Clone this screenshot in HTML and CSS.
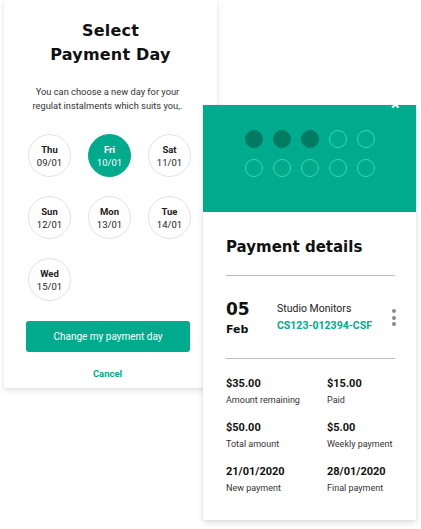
FILE: index.html
```html
<!DOCTYPE html>
<html>
<head>
<meta charset="utf-8">
<link rel="stylesheet" href="styles.css">
</head>
<body>
<div class="stage">
  <section class="card select-card">
    <h1 class="title">Select<br>Payment Day</h1>
    <p class="subtitle">You can choose a new day for your<br>regulat instalments which suits you,.</p>
    <div class="days">
      <div class="day"><span class="dname">Thu</span><span class="ddate">09/01</span></div>
      <div class="day active"><span class="dname">Fri</span><span class="ddate">10/01</span></div>
      <div class="day"><span class="dname">Sat</span><span class="ddate">11/01</span></div>
      <div class="day"><span class="dname">Sun</span><span class="ddate">12/01</span></div>
      <div class="day"><span class="dname">Mon</span><span class="ddate">13/01</span></div>
      <div class="day"><span class="dname">Tue</span><span class="ddate">14/01</span></div>
      <div class="day"><span class="dname">Wed</span><span class="ddate">15/01</span></div>
    </div>
    <div class="btn">Change my payment day</div>
    <div class="cancel">Cancel</div>
  </section>

  <section class="card details-card">
    <div class="close">×</div>
    <div class="hero">
      <div class="dots">
        <span class="dot full"></span><span class="dot full"></span><span class="dot full"></span><span class="dot"></span><span class="dot"></span>
        <span class="dot"></span><span class="dot"></span><span class="dot"></span><span class="dot"></span><span class="dot"></span>
      </div>
    </div>
    <div class="body">
      <h2 class="dtitle">Payment details</h2>
      <div class="item">
        <div class="date"><span class="dnum">05</span><span class="dmon">Feb</span></div>
        <div class="info"><span class="iname">Studio Monitors</span><span class="iref">CS123-012394-CSF</span></div>
        <div class="more"><i></i><i></i><i></i></div>
      </div>
      <div class="stats">
        <div class="stat"><b>$35.00</b><span>Amount remaining</span></div>
        <div class="stat"><b>$15.00</b><span>Paid</span></div>
        <div class="stat"><b>$50.00</b><span>Total amount</span></div>
        <div class="stat"><b>$5.00</b><span>Weekly payment</span></div>
        <div class="stat"><b>21/01/2020</b><span>New payment</span></div>
        <div class="stat"><b>28/01/2020</b><span>Final payment</span></div>
      </div>
    </div>
  </section>
</div>
</body>
</html>
```

FILE: styles.css
```css
* { box-sizing: border-box; margin: 0; padding: 0; }
html, body { background: #fff; }
body { font-family: Roboto, "Liberation Sans", sans-serif; color: #222; width: 421px; height: 529px; overflow: hidden; }
.stage { position: relative; width: 421px; height: 529px; }

.card { background: #fff; box-shadow: 0 3px 6px rgba(0,0,0,0.10), 0 0 1px rgba(0,0,0,0.12); }

.select-card { margin-left: 4px; width: 213px; height: 388px; padding-top: 19px; display: flex; flex-direction: column; align-items: center; }
.title { font-family: "DejaVu Sans", sans-serif; font-weight: 700; font-size: 16px; line-height: 24px; text-align: center; color: #111; letter-spacing: 0.2px; }
.subtitle { margin-top: 18px; font-size: 9.3px; line-height: 14px; text-align: center; color: #333; margin-left: -6px; }
.days { margin-top: 21px; display: grid; grid-template-columns: repeat(3, 43px); column-gap: 17px; row-gap: 19px; align-self: flex-start; margin-left: 24px; }
.day { width: 43px; height: 43px; border-radius: 50%; border: 1px solid #e2e2e2; display: flex; flex-direction: column; align-items: center; justify-content: center; font-size: 9.5px; line-height: 13px; color: #222; }
.dname { font-weight: 700; }
.day.active { background: #00aa8d; border-color: #00aa8d; color: #fff; }
.btn { margin-top: 20px; align-self: flex-start; margin-left: 22px; width: 164px; height: 31px; border-radius: 3px; background: #00aa8d; color: #fff; font-size: 10px; display: flex; align-items: center; justify-content: center; }
.cancel { margin-top: 15px; font-size: 9.5px; line-height: 14px; font-weight: 700; color: #00aa8d; margin-left: -6px; }

.details-card { position: absolute; left: 203px; top: 105px; width: 213px; height: 415px; box-shadow: 0 3px 6px rgba(0,0,0,0.12), 0 0 1px rgba(0,0,0,0.15); }
.close { position: absolute; left: 188px; top: -8px; color: #fff; font-size: 16px; line-height: 16px; font-weight: 700; }
.hero { height: 107px; background: #00aa8d; padding: 25px 0 0 42px; }
.dots { display: grid; grid-template-columns: repeat(5, 18px); column-gap: 10px; row-gap: 11px; }
.dot { width: 18px; height: 18px; border-radius: 50%; border: 1px solid #33dcb3; }
.dot.full { background: #007a62; border-color: #007a62; }

.body { padding: 24px 21px 0 23px; }
.dtitle { font-family: "DejaVu Sans", sans-serif; font-weight: 700; font-size: 15px; line-height: 22px; color: #111; padding-bottom: 17px; border-bottom: 1px solid #bdbdbd; }
.item { display: flex; align-items: flex-start; padding: 23px 0 21px; border-bottom: 1px solid #bdbdbd; }
.date { width: 51px; display: flex; flex-direction: column; }
.dnum { font-family: "DejaVu Sans", sans-serif; font-weight: 700; font-size: 17px; line-height: 20px; color: #111; }
.dmon { font-family: "DejaVu Sans", sans-serif; font-weight: 700; font-size: 11px; line-height: 14px; margin-top: 4px; color: #111; }
.info { flex: 1; display: flex; flex-direction: column; padding-top: 2px; }
.iname { font-size: 10.5px; line-height: 16px; color: #222; }
.iref { font-size: 10.5px; line-height: 16px; font-weight: 700; color: #00aa8d; margin-top: 1px; }
.more { display: flex; flex-direction: column; gap: 2.5px; padding-top: 10px; margin-right: -1px; }
.more i { display: block; width: 4px; height: 4px; border-radius: 50%; background: #8a8a8a; }

.stats { display: grid; grid-template-columns: 101px 1fr; padding-top: 17px; row-gap: 13px; }
.stat { display: flex; flex-direction: column; white-space: nowrap; }
.stat b { font-size: 11px; line-height: 15px; color: #111; }
.stat span { font-size: 9px; line-height: 14px; margin-top: 2px; color: #333; }
```
